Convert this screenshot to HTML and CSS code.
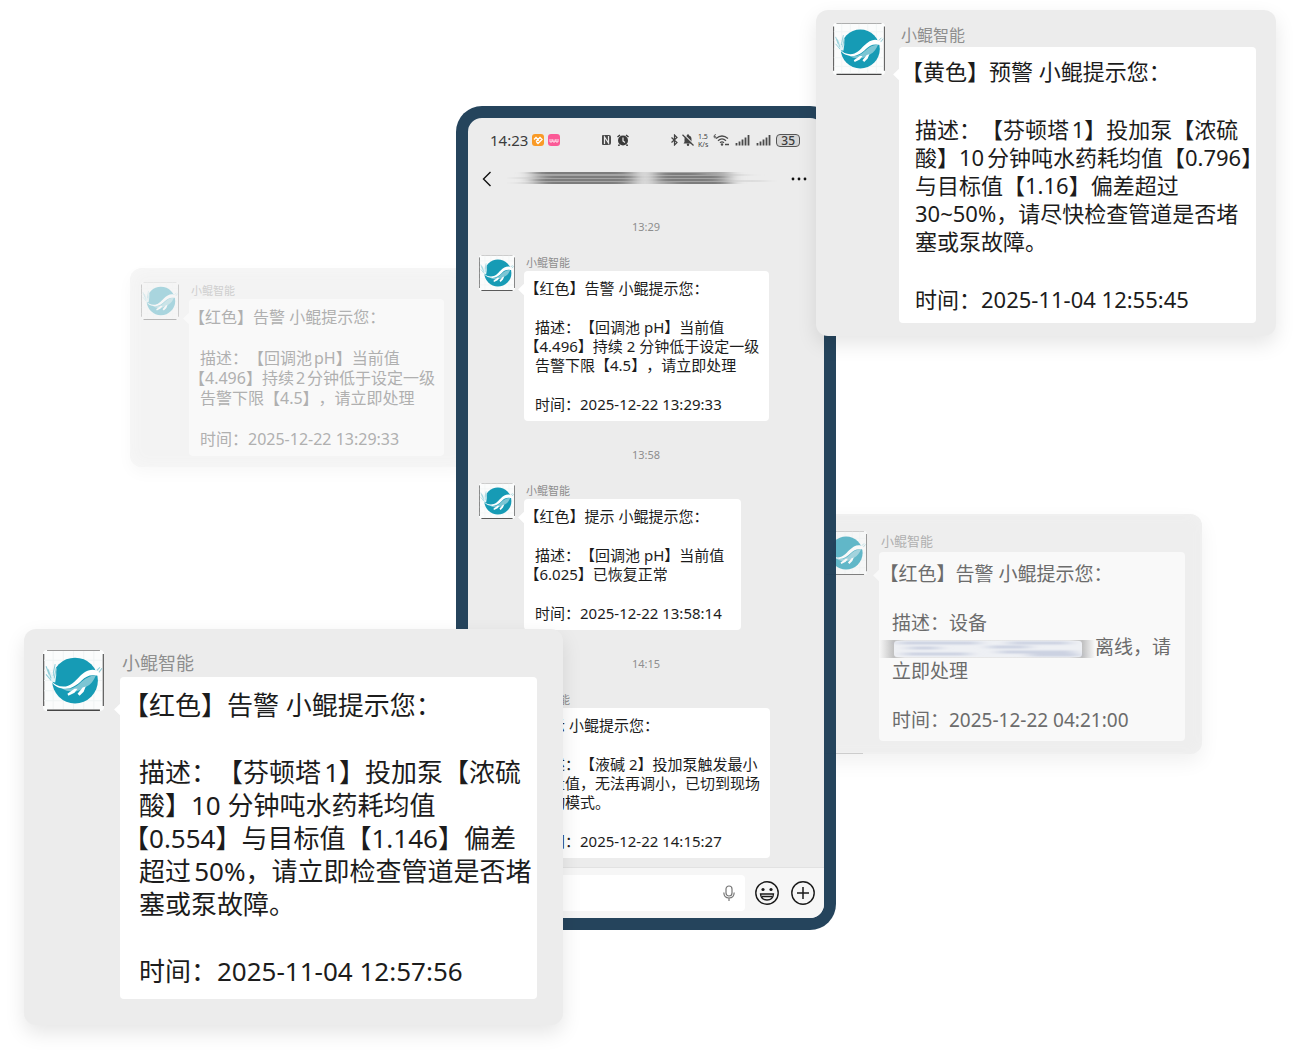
FILE: index.html
```html
<!DOCTYPE html>
<html lang="zh-CN">
<head>
<meta charset="utf-8">
<meta name="viewport" content="width=device-width, initial-scale=1">
<title>小鲲智能</title>
<link rel="stylesheet" href="styles.css">
</head>
<body>
<svg class="defs" aria-hidden="true">
  <symbol id="whale" viewBox="0 0 60 60">
    <rect x="0" y="0" width="60" height="60" rx="4" fill="#fbfcfc"/>
    <path d="M.5 4V55M59.500 4V55" stroke="#666" stroke-width="1.600"/>
    <path d="M4 59.300H56" stroke="#444" stroke-width="1.600"/>
    <path d="M4 .5H56" stroke="#999" stroke-width="1"/>
    <path d="M10 1v57M20 1v57M30 1v57M40 1v57M50 1v57M1 10h57M1 20h57M1 30h57M1 40h57M1 50h57" stroke="#f0f4f4" stroke-width="1" fill="none"/>
    <circle cx="31.500" cy="30" r="22.500" fill="#169bb5"/>
    <path d="M18 37C26 40 32 37 36 33C41 28 46 25 52 25C50 30 47 34 43 36C38 39 34 41 30 41C25 41 21 40 18 37Z" fill="#7cc6d4"/>
    <path d="M8 30C11 34 15 36 20 36C27 36 31 31 36 26C41 21 47 18 52 20C55 21 57 23 57 25L52 25C46 24 42 26 38 30C33 35 27 39 20 38C14 37 10 35 8 30Z" fill="#fff"/>
    <path d="M31 38L24 43L25 45L31 42L34 38ZM39 37L34 43L36 45L40 41L42 36Z" fill="#fff"/>
    <path d="M8 31C5 27 4 22 4 17L8 22L10 26L11 16L13 18L13 25L12 32Z" fill="#e3f3f6"/>
    <path d="M3 16L6 24M5 19L8 28M12 14L10 23M13 18L11 28M3 24L8 30M53 20L56 17M55 22L58 18" stroke="#8fcdd8" stroke-width="1" fill="none"/>
  </symbol>
</svg>

<main class="stage">
  <div class="scene">

    <article class="card card-left">
      <div class="msg msg-s">
        <svg class="avatar" role="img" aria-label="小鲲智能"><use href="#whale"/></svg>
        <div class="body">
          <h2 class="name">小鲲智能</h2>
          <div class="bubble">
            <p><span class="open">【</span>红色】告警 小鲲提示您：</p>
            <p>描述：【回调池pH】当前值<br><span class="open">【</span>4.496】持续2分钟低于设定一级<br>告警下限【4.5】，请立即处理</p>
            <p>时间：2025-12-22 13:29:33</p>
          </div>
        </div>
      </div>
    </article>

    <article class="card card-right">
      <div class="msg msg-m">
        <svg class="avatar" role="img" aria-label="小鲲智能"><use href="#whale"/></svg>
        <div class="body">
          <h2 class="name">小鲲智能</h2>
          <div class="bubble">
            <p><span class="open">【</span>红色】告警 小鲲提示您：</p>
            <p>描述：设备<br><svg class="masked" viewBox="0 0 216 18" preserveAspectRatio="none" aria-hidden="true">
              <defs>
                <linearGradient id="edge"><stop offset="0" stop-color="#999" stop-opacity="0"/><stop offset=".07" stop-color="#999" stop-opacity=".6"/><stop offset=".12" stop-color="#bbb" stop-opacity=".3"/><stop offset=".88" stop-color="#bbb" stop-opacity=".3"/><stop offset=".94" stop-color="#999" stop-opacity=".6"/><stop offset="1" stop-color="#999" stop-opacity="0"/></linearGradient>
                <filter id="soft" x="-10%" y="-50%" width="120%" height="200%"><feGaussianBlur stdDeviation="7 .9"/></filter>
              </defs>
              <rect width="216" height="18" fill="url(#edge)"/>
              <rect x="15" y="1" width="188" height="16" rx="3" fill="#eef0f4"/>
              <g filter="url(#soft)" stroke="#aab4d0" stroke-width="1.500"><path d="M20 3H100M30 8H60M110 7H150M130 3H190M25 14H90M120 12H195M150 15H200"/></g>
            </svg>离线，请<br>立即处理</p>
            <p>时间：2025-12-22 04:21:00</p>
          </div>
        </div>
      </div>
    </article>

    <section class="phone">
      <header class="status">
        <span class="clock">14:23</span>
        <svg class="app" viewBox="0 0 12 12"><rect width="12" height="12" rx="3" fill="#f99a26"/><path d="M2 5.500L4 3.500L7 6.500M4 7.500L8 3.500L10 5.500L6 9.500L4.500 8" stroke="#fff" stroke-width="1.400" fill="none"/></svg>
        <svg class="app" viewBox="0 0 12 12"><rect width="12" height="12" rx="3" fill="#fb5a96"/><path d="M2 5v3h2V5M5 5.500v2.500h2V5.500M8 5v3h2V5" stroke="#fff" stroke-width=".8" fill="none"/></svg>
        <svg class="nfc" viewBox="0 0 28 12"><path d="M2 1h6q2 0 2 2v6q0 2-2 2H2q-1 0-1-1V2q0-1 1-1Z" fill="#4a4a4a"/><path d="M3.500 10V3L7.500 9V2" stroke="#ececec" stroke-width="1.200" fill="none"/><circle cx="22" cy="6.500" r="5" fill="#3a3a3a"/><path d="M16.500 3L19 1M27.500 3L25 1M18.500 10.500l-1 1.500M25.500 10.500l1 1.500" stroke="#3a3a3a" stroke-width="1.500"/><path d="M22 3.500V7L24 8.500" stroke="#ececec" stroke-width="1.200" fill="none"/></svg>
        <svg class="bell" viewBox="0 0 24 12"><path d="M1.500 3.500L7 8.500L4.500 11V1L7 3.500L1.500 8.500" stroke="#444" stroke-width="1.200" fill="none"/><path d="M13.500 9.500L14.500 8V5Q14.500 2 17 1.500V.5h2v1Q21.500 2 21.500 5V8L22.500 9.500Z" fill="#444"/><circle cx="18" cy="10.800" r="1.200" fill="#444"/><path d="M13.500 0L24 10.500" stroke="#ececec" stroke-width="1.200"/><path d="M12.500 .8L23.500 11.500" stroke="#444" stroke-width="1.200"/></svg>
        <span class="rate"><span>1.5</span><span>K/s</span></span>
        <svg class="wifi" viewBox="0 0 16 12"><path d="M3 4.500Q9 -.5 15 4.500M5 6.700Q9 3 13 6.700M7 8.700Q9 7 11 8.700" stroke="#4a4a4a" stroke-width="1.300" fill="none"/><circle cx="9" cy="10.500" r="1.200" fill="#4a4a4a"/><path d="M12 10.500h4" stroke="#4a4a4a" stroke-width="1.500"/><path d="M3 .5Q1 .5 1 2.500Q1 4 2 4Q3 4 3 3Q3 2 1 2.500" stroke="#4a4a4a" stroke-width=".8" fill="none"/></svg>
        <svg class="bars" viewBox="0 0 15 12"><path d="M1.500 9v2.500M4.500 7.500v4M7.500 5.500v6M10.500 3.500v8M13.500 1v10.500" stroke="#4a4a4a" stroke-width="1.800"/></svg>
        <svg class="bars" viewBox="0 0 15 12"><path d="M1.500 9v2.500M4.500 7.500v4M7.500 5.500v6M10.500 3.500v8M13.500 1v10.500" stroke="#4a4a4a" stroke-width="1.800"/></svg>
        <span class="battery">35</span>
      </header>

      <nav class="topbar">
        <button class="icon-btn" type="button" aria-label="返回"><svg width="10" height="16" viewBox="0 0 10 16"><path d="M8.500 1L1.500 8L8.500 15" stroke="#111" stroke-width="1.400" fill="none"/></svg></button>
        <svg class="title-mask" viewBox="0 0 270 18" preserveAspectRatio="none" aria-hidden="true">
          <defs><filter id="streak" x="-10%" y="-50%" width="120%" height="200%"><feGaussianBlur stdDeviation="8 .7"/></filter></defs>
          <g filter="url(#streak)" stroke="#555" stroke-width="1.200">
            <path stroke="#a4a4a4" stroke-width="12" d="M26 8H130M146 8H222"/>
            <path d="M26 3H120M36 7H128M28 10H124M34 13H118M152 4H196M150 7H216M152 10H212M166 13H222"/>
            <path stroke="#ccc" d="M8 8H30M225 11H258M10 13H30M225 5H240"/>
          </g>
        </svg>
        <button class="icon-btn" type="button" aria-label="更多"><svg width="16" height="4" viewBox="0 0 16 4"><g fill="#111"><circle cx="2" cy="2" r="1.400"/><circle cx="8" cy="2" r="1.400"/><circle cx="14" cy="2" r="1.400"/></g></svg></button>
      </nav>

      <div class="chat">
        <time class="stamp">13:29</time>
        <div class="msg">
          <svg class="avatar" role="img" aria-label="小鲲智能"><use href="#whale"/></svg>
          <div class="body">
            <h2 class="name">小鲲智能</h2>
            <div class="bubble">
              <p><span class="open">【</span>红色】告警 小鲲提示您：</p>
              <p>描述：【回调池 pH】当前值<br><span class="open">【</span>4.496】持续 2 分钟低于设定一级<br>告警下限【4.5】，请立即处理</p>
              <p>时间：2025-12-22 13:29:33</p>
            </div>
          </div>
        </div>
        <time class="stamp">13:58</time>
        <div class="msg">
          <svg class="avatar" role="img" aria-label="小鲲智能"><use href="#whale"/></svg>
          <div class="body">
            <h2 class="name">小鲲智能</h2>
            <div class="bubble">
              <p><span class="open">【</span>红色】提示 小鲲提示您：</p>
              <p>描述：【回调池 pH】当前值<br><span class="open">【</span>6.025】已恢复正常</p>
              <p>时间：2025-12-22 13:58:14</p>
            </div>
          </div>
        </div>
        <time class="stamp">14:15</time>
        <div class="msg">
          <svg class="avatar" role="img" aria-label="小鲲智能"><use href="#whale"/></svg>
          <div class="body">
            <h2 class="name">小鲲智能</h2>
            <div class="bubble">
              <p>提示 小鲲提示您：</p>
              <p>描述：【液碱 2】投加泵触发最小<br>流量值，无法再调小，已切到现场<br>手动模式。</p>
              <p>时间：2025-12-22 14:15:27</p>
            </div>
          </div>
        </div>
      </div>

      <footer class="composer">
        <div class="field">
          <input type="text" aria-label="消息">
          <svg width="12" height="16" viewBox="0 0 12 16" aria-hidden="true"><rect x="3" y="1" width="6" height="10" rx="3" stroke="#777" stroke-width="1.200" fill="none"/><path d="M.8 7.500Q1 13 6 13Q11 13 11.200 7.500M6 13v3" stroke="#777" stroke-width="1.200" fill="none"/></svg>
        </div>
        <button class="icon-btn" type="button" aria-label="表情"><svg width="24" height="24" viewBox="0 0 24 24"><circle cx="12" cy="12" r="11.200" stroke="#1a1a1a" stroke-width="1.400" fill="none"/><circle cx="8" cy="8.500" r="1.600" fill="#1a1a1a"/><circle cx="16" cy="8.500" r="1.600" fill="#1a1a1a"/><path d="M5.500 13h13Q18 19 12 19Q6 19 5.500 13ZM7 15.500h10" stroke="#1a1a1a" stroke-width="1.300" fill="none"/></svg></button>
        <button class="icon-btn" type="button" aria-label="添加"><svg width="24" height="24" viewBox="0 0 24 24"><circle cx="12" cy="12" r="11.200" stroke="#1a1a1a" stroke-width="1.400" fill="none"/><path d="M12 6v12M6 12h12" stroke="#1a1a1a" stroke-width="1.500"/></svg></button>
      </footer>
    </section>

    <article class="card card-yellow">
      <div class="msg msg-l">
        <svg class="avatar" role="img" aria-label="小鲲智能"><use href="#whale"/></svg>
        <div class="body">
          <h2 class="name">小鲲智能</h2>
          <div class="bubble">
            <p><span class="open">【</span>黄色】预警 小鲲提示您：</p>
            <p>描述：【芬顿塔1】投加泵【浓硫<br>酸】10分钟吨水药耗均值【0.796<span class="close">】</span><br>与目标值【1.16】偏差超过<br>30~50%，请尽快检查管道是否堵<br>塞或泵故障。</p>
            <p>时间：2025-11-04 12:55:45</p>
          </div>
        </div>
      </div>
    </article>

    <article class="card card-red">
      <div class="msg msg-xl">
        <svg class="avatar" role="img" aria-label="小鲲智能"><use href="#whale"/></svg>
        <div class="body">
          <h2 class="name">小鲲智能</h2>
          <div class="bubble">
            <p><span class="open">【</span>红色】告警 小鲲提示您：</p>
            <p>描述：【芬顿塔1】投加泵【浓硫<br>酸】10 分钟吨水药耗均值<br><span class="open">【</span>0.554】与目标值【1.146】偏差<br>超过50%，请立即检查管道是否堵<br>塞或泵故障。</p>
            <p>时间：2025-11-04 12:57:56</p>
          </div>
        </div>
      </div>
    </article>

  </div>
</main>
</body>
</html>
```
FILE: styles.css
```css
* {
  box-sizing: border-box;
}

body {
  margin: 0;
  background: #fff;
  color: #1c1c1c;
  font-family: "Noto Sans", "Noto Sans CJK SC", sans-serif;
  text-spacing-trim: space-all;
  text-autospace: normal;
}

h2,
p {
  margin: 0;
  font-weight: 400;
}

.defs {
  position: absolute;
  width: 0;
  height: 0;
}

.stage {
  padding: 106px 6px 132px 0;
  overflow: hidden;
}

/* The floating cards are placed around the phone */
.scene {
  position: relative;
  width: 380px;
  margin: 0 auto;
}

/* Message: avatar, sender and bubble */
.msg {
  --size: 15px;
  --line: 19px;
  --para: 20px;
  --avatar: 36px;
  --gap: 9px;
  --name: 11px;
  --name-line: 16px;
  --pad: 8px 10px 7px 11px;
  display: flex;
  gap: var(--gap);
}

.msg-s {
  --size: 16px;
  --line: 20px;
  --para: 21px;
  --avatar: 38px;
  --gap: 10px;
  --name-line: 17px;
  --pad: 8px 0 7px 11px;
}

.msg-m {
  --size: 19px;
  --line: 24px;
  --para: 25px;
  --avatar: 44px;
  --gap: 12px;
  --name: 13px;
  --name-line: 21px;
  --pad: 10px 0 9px 13px;
}

.msg-l {
  --size: 22px;
  --line: 28px;
  --para: 30px;
  --avatar: 52px;
  --gap: 14px;
  --name: 16px;
  --name-line: 24px;
  --pad: 10px 0 10px 16px;
}

.msg-xl {
  --size: 26px;
  --line: 33px;
  --para: 34px;
  --avatar: 61px;
  --gap: 16px;
  --name: 18px;
  --name-line: 27px;
  --pad: 12px 0 11px 19px;
}

.avatar {
  flex: none;
  width: var(--avatar);
  height: var(--avatar);
}

.name {
  padding-left: 2px;
  color: #8e8e8e;
  font-size: var(--name);
  line-height: var(--name-line);
}

.bubble {
  position: relative;
  display: flex;
  flex-direction: column;
  gap: var(--para);
  min-width: 217px;
  padding: var(--pad);
  border-radius: 4px;
  background: #fff;
  font-size: var(--size);
  line-height: var(--line);
  white-space: nowrap;
}

.bubble::before {
  content: "";
  position: absolute;
  top: calc(var(--line) - 5px);
  left: -4px;
  width: 9px;
  height: 9px;
  background: inherit;
  transform: rotate(45deg);
}

/* Half-width brackets at the ends of a line */
.open,
.close {
  font-feature-settings: "halt";
}

.open {
  margin-left: -3px;
}

/* Cards */
.card {
  position: absolute;
  border-radius: 12px;
  background: #ececec;
  box-shadow: 0 8px 20px rgba(0, 0, 0, .1);
}

.card .body {
  flex: 1;
  min-width: 0;
}

.card-left {
  top: 162px;
  left: -326px;
  width: 340px;
  padding: 14px 26px 11px 11px;
  background: #f3f3f3;
  box-shadow: inset 0 0 16px #f8f8f8, 0 6px 16px rgba(0, 0, 0, .03);
}

.card-left .name {
  color: #cfcfcf;
}

.card-left .bubble {
  background: #f9f9f9;
  color: #b0b0b0;
}

.card-left .avatar {
  opacity: .33;
}

.card-right {
  top: 408px;
  left: 354px;
  width: 392px;
  padding: 17px 17px 13px 13px;
  background: #eee;
  box-shadow: inset 0 0 12px #f1f1f1, 0 8px 20px rgba(0, 0, 0, .06);
}

/* Hairline along the start of the lower edge */
.card-right::after {
  content: "";
  position: absolute;
  bottom: 0;
  left: 13px;
  width: 40px;
  height: 1px;
  background: #ccc;
}

.card-right .name {
  color: #b0b0b0;
}

.card-right .bubble {
  background: #f9f9f9;
  color: #6c6c6c;
}

.card-right .avatar {
  opacity: .65;
}

.masked {
  width: 216px;
  height: 18px;
  margin-left: -13px;
  vertical-align: middle;
}

.card-yellow {
  top: -96px;
  left: 360px;
  width: 460px;
  padding: 13px 20px 13px 17px;
}

.card-red {
  top: 523px;
  left: -432px;
  width: 539px;
  padding: 21px 26px 26px 19px;
}

/* Phone */
.phone {
  position: relative;
  display: flex;
  flex-direction: column;
  border: 12px solid rgba(33, 64, 89, .98);
  border-radius: 26px;
  background: #ececec padding-box;
}

.status {
  display: flex;
  align-items: center;
  height: 44px;
  padding: 0 24px 0 22px;
  color: #3c3c3c;
}

.clock {
  font-size: 15px;
}

.app {
  width: 12px;
  height: 12px;
  margin-left: 4px;
}

.nfc {
  width: 28px;
  height: 12px;
  margin: 0 auto;
}

.bell {
  width: 24px;
  height: 12px;
}

.rate {
  display: grid;
  gap: 1px;
  margin-left: 4px;
  font-size: 7px;
  line-height: 7px;
}

.wifi {
  width: 16px;
  height: 12px;
  margin-left: 5px;
}

.bars {
  width: 15px;
  height: 12px;
  margin-left: 6px;
}

.battery {
  margin-left: 5px;
  padding: 0 4px;
  border: 1px solid #555;
  border-radius: 4px;
  background: #d6d6d6;
  font-size: 12px;
  font-weight: 500;
  line-height: 11px;
}

.topbar {
  display: flex;
  align-items: center;
  justify-content: space-between;
  height: 34px;
  padding: 0 17px 0 14px;
}

.title-mask {
  width: 270px;
  height: 18px;
}

.icon-btn {
  display: flex;
  padding: 0;
  border: 0;
  background: none;
}

.chat {
  display: flex;
  flex-direction: column;
  padding: 23px 11px 9px;
}

.stamp {
  margin-bottom: 20px;
  color: #8e8e8e;
  font-size: 11px;
  line-height: 16px;
  text-align: center;
}

.msg + .stamp {
  margin-top: 26px;
}

.composer {
  display: flex;
  align-items: center;
  gap: 12px;
  height: 51px;
  padding: 0 9px 0 11px;
  border-top: 1px solid #e2e2e2;
  border-radius: 0 0 14px 14px;
  background: #f6f6f6;
}

.field {
  display: flex;
  flex: 1;
  align-items: center;
  height: 36px;
  margin-right: -2px;
  padding: 0 10px;
  border-radius: 4px;
  background: #fff;
}

.field input {
  flex: 1;
  min-width: 0;
  border: 0;
  outline: 0;
  background: none;
  font: inherit;
}
```
